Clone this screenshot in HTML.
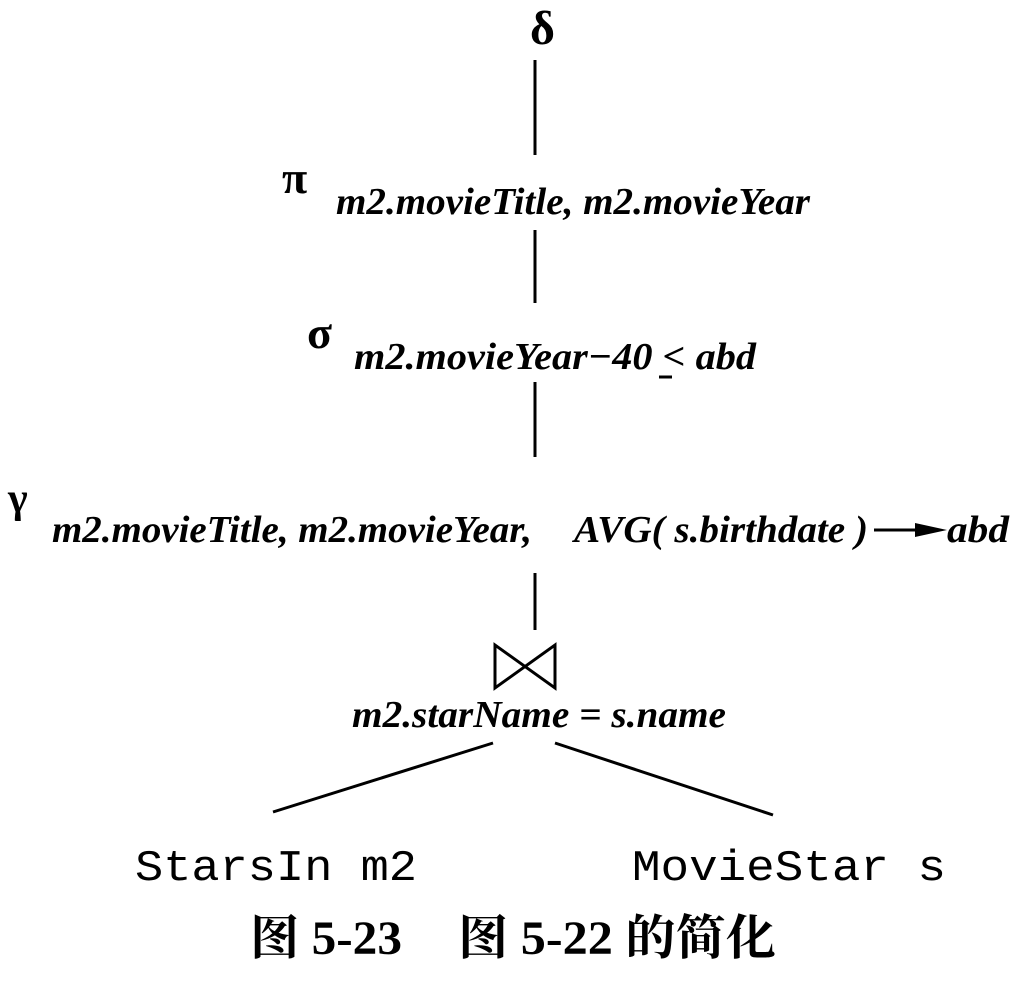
<!DOCTYPE html>
<html><head><meta charset="utf-8"><style>
html,body{margin:0;padding:0;background:#fff;width:1018px;height:986px;overflow:hidden}
svg{display:block}
.it{font-family:"Liberation Serif",serif;font-style:italic;font-weight:bold;fill:#000}
.gr{font-family:"Liberation Serif",serif;fill:#000}
.mono{font-family:"Liberation Mono",monospace;fill:#000}
.cj{font-family:"Liberation Serif","Noto Serif CJK SC","Noto Sans CJK SC",serif;fill:#000;font-weight:bold}
</style></head><body>
<svg width="1018" height="986" viewBox="0 0 1018 986" xmlns="http://www.w3.org/2000/svg">
<g stroke="#000" stroke-width="3" fill="none">
<line x1="535" y1="60" x2="535" y2="155"/>
<line x1="535" y1="230" x2="535" y2="303"/>
<line x1="535" y1="382" x2="535" y2="457"/>
<line x1="535" y1="573" x2="535" y2="630"/>
<path d="M495 645 L495 688 L555 645 L555 688 Z"/>
<line x1="493" y1="743" x2="273" y2="812"/>
<line x1="555" y1="743" x2="773" y2="815"/>
</g>
<line x1="659" y1="377" x2="672" y2="377" stroke="#000" stroke-width="3"/>
<text class="gr" x="530" y="44" font-size="48" font-weight="bold">δ</text>
<text class="gr" x="282" y="193" font-size="46" font-weight="bold">π</text>
<text class="it" x="336" y="214" font-size="38" textLength="474" lengthAdjust="spacingAndGlyphs">m2.movieTitle, m2.movieYear</text>
<text class="gr" x="307" y="348" font-size="46" font-weight="bold">σ</text>
<text class="it" x="354" y="369" font-size="38" textLength="402" lengthAdjust="spacingAndGlyphs">m2.movieYear−40 &lt; abd</text>
<text class="gr" x="8" y="512" font-size="42" font-weight="bold">γ</text>
<text class="it" x="52" y="542" font-size="38" textLength="480" lengthAdjust="spacingAndGlyphs">m2.movieTitle, m2.movieYear,</text>
<text class="it" x="574" y="542" font-size="38" textLength="294" lengthAdjust="spacingAndGlyphs">AVG( s.birthdate )</text>
<line x1="874" y1="530" x2="935" y2="530" stroke="#000" stroke-width="3"/>
<path d="M915 523 L947 530 L915 537 Z" fill="#000"/>
<text class="it" x="947" y="542" font-size="38" textLength="62" lengthAdjust="spacingAndGlyphs">abd</text>
<text class="it" x="352" y="727" font-size="38" textLength="374" lengthAdjust="spacingAndGlyphs">m2.starName = s.name</text>
<text class="mono" x="135" y="880" font-size="44" textLength="282" lengthAdjust="spacingAndGlyphs">StarsIn m2</text>
<text class="mono" x="632" y="880" font-size="44" textLength="314" lengthAdjust="spacingAndGlyphs">MovieStar s</text>
<text class="cj" x="250" y="954" font-size="48" textLength="152" lengthAdjust="spacingAndGlyphs">图 5-23</text>
<text class="cj" x="458" y="954" font-size="48" textLength="318" lengthAdjust="spacingAndGlyphs">图 5-22 的简化</text>
</svg>
</body></html>
